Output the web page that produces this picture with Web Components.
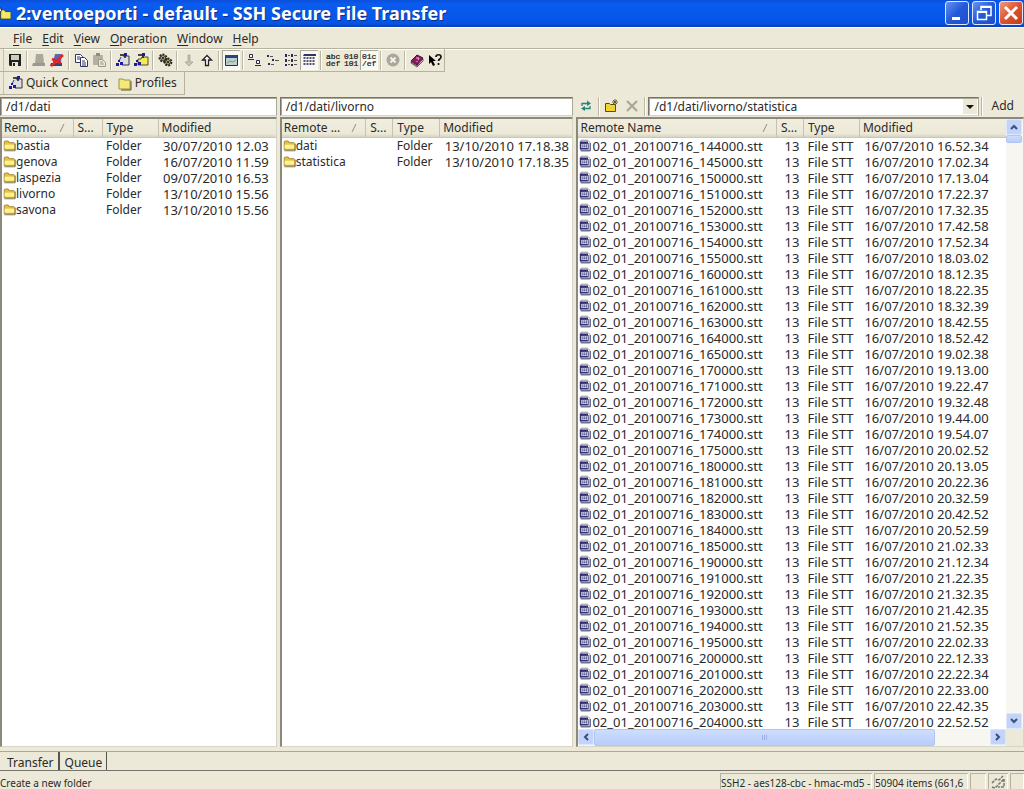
<!DOCTYPE html>
<html lang="en">
<head>
<meta charset="utf-8">
<title>2:ventoeporti - default - SSH Secure File Transfer</title>
<style>
html,body{margin:0;height:100%}
body{font:12px/16px "Noto Sans","Open Sans",sans-serif;color:#2a2a2a;background:#ece9d8;overflow:hidden}
</style>
</head>
<body>
<sftp-app></sftp-app>
<script>
const RESET = `
*{box-sizing:border-box}
button,input,select{font:inherit;color:inherit;margin:0;padding:0;border:0;background:none;border-radius:0;outline:0}
button{display:flex;align-items:center;justify-content:center;white-space:nowrap}
svg{display:block;flex:none}`;

function define(name, css, html, setup) {
  customElements.define(name, class extends HTMLElement {
    connectedCallback() {
      if (this.shadowRoot) return;
      const root = this.attachShadow({ mode: 'open' });
      root.innerHTML = `<style>${RESET}${css}</style>${typeof html === 'function' ? html(this) : html}`;
      if (setup) setup(this, root);
    }
  });
}

/* 16x16 icon artwork */
const ICONS = {
  app: '<path d="M5 5h4l1 2h6v8H5z" fill="#f5e96b" stroke="#44421a"/><path d="M1 13V6l4-3 1 3-3 3v5z" fill="#f4f4f4" stroke="#222"/>',
  save: '<path d="M2 2h12v12H3l-1-1z" fill="#222"/><path d="M4 3h8v5H4z" fill="#cfcfb5"/><path d="M5 10h6v4H5z" fill="#e8e8e0"/><path d="M6 11h2v3H6z" fill="#222"/>',
  connect: '<path d="M5 2h7l1 9H4z" fill="#aaa79b"/><path d="M2 11h12v3H1z" fill="#9c998e"/>',
  disconnect: '<path d="M6 2h7l-1 8H4z" fill="#5a68ad"/><path d="M2 11h11v3H1z" fill="#37417d"/><path d="M2 14 14 3M3 7l9 4" stroke="#e3222b" stroke-width="2.6"/>',
  copy: '<g fill="#fff" stroke="#343463"><path d="M2.500 2.500h5l2 2v6h-7z"/><path d="M7.500 5.500h4l3 3v6h-7z"/></g><path d="M4 5h3M4 7h3M9 9h3M9 11h4M9 13h4" stroke="#343463"/>',
  paste: '<path d="M2 3h10v10H2z" fill="#b3b0a4"/><path d="M5 1h4v3H5z" fill="#8f8c81"/><path d="M7.500 7.500h4l3 3v4h-7z" fill="#ece9d8" stroke="#99968a"/><path d="M9 10h3M9 12h4" stroke="#99968a"/>',
  newterm: '<path d="M7 4h7v9H5V7z" fill="#ddd"/><path d="M8 4h6v9H7" fill="none" stroke="#334"/><path d="M5 3h5v3" fill="none" stroke="#111" stroke-width="1.4"/><path d="M6 5 4 9" stroke="#33a"/><path d="M1 11h3v3H1zM5 10h3v3H5zM3 8h2v2H3zM9 1h3v3H9z" fill="#1c1c9c"/>',
  newftp: '<path d="M5 7h3l1-2h6v8H5z" fill="#f4ec55" stroke="#555020"/><path d="M5 3h5v3" fill="none" stroke="#111" stroke-width="1.4"/><path d="M1 11h3v3H1zM5 10h3v3H5zM3 8h2v2H3zM9 1h3v3H9z" fill="#1c1c9c"/>',
  settings: '<g fill="none" stroke="#222" stroke-width="2"><circle cx="6" cy="6" r="3.4" stroke-dasharray="2 1"/><circle cx="11" cy="10" r="3.4" stroke-dasharray="2 1"/></g><g fill="#cfc55d" stroke="#333"><circle cx="6" cy="6" r="2.4"/><circle cx="11" cy="10" r="2.4"/></g><path d="M5 5h2v2H5zM10 9h2v2h-2z" fill="#333"/>',
  down: '<path d="M7 3h2v7h3l-4 4-4-4h3z" fill="#c8c5b8" stroke="#9b988c" stroke-width=".7"/>',
  up: '<path d="M6.500 13.500V8h-3L8 3.500 12.500 8h-3v5.500z" fill="#fff" stroke="#222" stroke-width="1.3"/>',
  pane: '<path d="M2.500 3.500h12v10h-12z" fill="#bcd0cf" stroke="#223056"/><path d="M2 3h13v3H2z" fill="#27467e"/><path d="M4 11l3-2 3 1 3-2" fill="none" stroke="#829b80"/>',
  large: '<g fill="#fff" stroke="#29295e"><path d="M2.500 2.500h3v3h-3zM9.500 8.500h3v3h-3z"/></g><path d="M1 7.500h6M8 13.500h6" stroke="#29295e"/>',
  small: '<g fill="#29295e"><path d="M2 3h2v2H2zM7 7h2v2H7zM3 11h2v2H3z"/></g><path d="M5 4.500h3M10 8.500h4M6 12.500h3" stroke="#555"/>',
  list: '<g fill="#29295e"><path d="M2 2h2v3H2zM2 7h2v3H2zM2 12h2v2H2zM8 2h2v3H8zM8 7h2v3H8zM8 12h2v2H8z"/></g><path d="M5 3.500h2M5 8.500h2M5 12.500h2M11 3.500h3M11 8.500h3M11 12.500h3" stroke="#555"/>',
  details: '<path d="M3 2h12v2H2z" fill="#343460"/><path d="M3.500 5v9M6.500 5v9M9.500 5v9M12.500 5v9" stroke="#55557a" stroke-width="2" stroke-dasharray="2 1"/>',
  cancel: '<circle cx="8" cy="8" r="6.500" fill="#aaa79e"/><path d="m5.500 5.500 5 5m0-5-5 5" stroke="#f5f3e9" stroke-width="2"/>',
  book: '<path d="m2 9 6-6 6 3-6 7z" fill="#8c1c62" stroke="#461036"/><path d="m2 10 6 4 6-7v2l-6 6-6-4z" fill="#fff" stroke="#461036" stroke-width=".7"/><path d="m7 6 3 0-1 2M8 9v1" stroke="#f4b6d7" fill="none"/>',
  whats: '<path d="M2 3v9l2-2 2 4 2-1-2-4h3z" fill="#000"/><path d="M9 5c0-3 5-3 5 0 0 2-2.500 2-2.500 4M11.500 11v2" fill="none" stroke="#111" stroke-width="1.700"/>',
  folder: '<path d="M2 4h4l1 1h6v9H2z" fill="#f6e97a" stroke="#9d9140"/><path d="M14 6v9H4" fill="none" stroke="#5b5426"/>',
  closedfolder: '<path d="M1.500 13.500v-10l1-1h4l1 2h6l1 1v8z" fill="#e9c53c" stroke="#99751c"/><path d="M2 7h12v5H2z" fill="#fdf19b"/><path d="M2 14.500h13V6" fill="none" stroke="#7c6a34"/>',
  stt: '<path d="M2.500 1.500h8l3 3v10h-11z" fill="#f6f6fc" stroke="#77779a"/><path d="M1 3h10v3H1zM1 3h2v9H1zM1 11h10v2H1z" fill="#30306a"/><path d="M3 6h8v5H3z" fill="#d4d4ea"/><path d="M4 7.500h6M4 9.500h6" stroke="#30306a" stroke-width="1.200" stroke-dasharray="1.500 .8"/><path d="M11.500 5v8M2 14.500h12V5" fill="none" stroke="#43437a"/>',
  refresh: '<g fill="none" stroke="#26847a" stroke-width="1.300"><path d="M4 8V5.500h6M12 8v2.500H6"/></g><path d="M9 2.500l4 3L9 8zM7 8l-4 2.500L7 13z" fill="#26847a"/>',
  newfolder: '<path d="M1.500 5.500h4l1 1h5v7h-10z" fill="#f2d62d" stroke="#554b12"/><path d="M11 1v6M8 4h6M9 2l4 4m0-4L9 6" stroke="#5b562d" stroke-width=".9"/>',
  remove: '<path d="m3 3 10 10m0-10L3 13" stroke="#aaa79b" stroke-width="2.200"/>',
  link: '<path d="M2 9l4-4 3 1 4-4M2 13l3 1 9-9v8H8" fill="none" stroke="#77756d" stroke-width="1.500" stroke-dasharray="3 1"/>'
};
const textIcon = (a, b) => `<g font-family="Liberation Mono,monospace" font-size="8" fill="#111" stroke="#111" stroke-width=".2"><text x="1" y="7">${a}</text><text x="1" y="14">${b}</text></g>`;
ICONS.ascii = textIcon('abc', 'def');
ICONS.binary = textIcon('010', '101');
ICONS.auto = textIcon('01c', '/ef');
const icon = (n, s = 16) => `<svg width="${s}" height="${s}" viewBox="0 0 16 16" aria-hidden="true">${ICONS[n]}</svg>`;

define('title-bar', `
:host{display:flex;align-items:center;height:27px;flex:none;color:#fff;
background:linear-gradient(#0a4fd8,#0a5cf0 15%,#0557ea 70%,#0553e2 88%,#0a3fb4);padding:0 1px 2px 0}
.mark{margin:0 5px 0 -4px}
h1{flex:1;margin:0;font:bold 18px/24px "Noto Sans",sans-serif;text-shadow:1px 1px #0a318c;white-space:nowrap}
.ctl{display:flex;gap:3px}
button{width:24px;height:24px;border:1px solid #dfe8fb;border-radius:3px;background:linear-gradient(135deg,#6a93ee,#2358d8 50%,#1d4fca)}
button.close{background:linear-gradient(135deg,#f09a7c,#dd5231 50%,#c23c18)}`,
`<span class="mark">${icon('app', 15)}</span><h1><slot></slot></h1><div class="ctl">
<button aria-label="Minimize"><svg width="18" height="18"><path d="M4 13h8v3H4z" fill="#fff"/></svg></button>
<button aria-label="Restore"><svg width="18" height="18" fill="none" stroke="#fff"><path d="M6 6V2.500h10v9h-4" stroke-width="1.500"/><path d="M6 3h10" stroke-width="2"/><path d="M2.500 7.500h9v8h-9z" stroke-width="1.500"/><path d="M2 8h10" stroke-width="2"/></svg></button>
<button class="close" aria-label="Close"><svg width="18" height="18"><path d="m3 3 12 12m0-12L3 15" stroke="#fff" stroke-width="3"/></svg></button></div>`);

define('menu-bar', `
:host{display:flex;align-items:center;height:22px;flex:none;padding:1px 0 0 8px;border-bottom:1px solid #b5b2a2;box-shadow:0 1px #fff;border-top:1px solid #fff}
button{height:20px;padding:0 5px}
span:first-child{text-decoration:underline;text-underline-offset:2px}`,
['File', 'Edit', 'View', 'Operation', 'Window', 'Help'].map(m => `<button><span>${m[0]}</span><span>${m.slice(1)}</span></button>`).join(''));

define('tool-strip', `
:host{display:flex;align-items:center;height:23px;flex:none;align-self:flex-start;padding-left:6px;
border-right:1px solid #b5b2a2;border-bottom:1px solid #b5b2a2;box-shadow:inset 3px 0 #ece9d8,inset 4px 0 #c4c1b1}`, '<slot></slot>');

define('tool-button', `
:host{display:block}
button{gap:2px;width:18px;height:20px}
:host([label]) button{width:auto;padding:0 7px 0 2px}
:host([pressed]) button{background:#f8f7f1;box-shadow:inset 1px 1px #aca899,inset -1px -1px #fff}`,
el => `<button aria-label="${el.getAttribute('label') || el.getAttribute('icon')}">${icon(el.getAttribute('icon'))}<slot></slot></button>`);

define('tool-separator', `:host{display:block;width:6px;height:19px;flex:none;background:linear-gradient(90deg,transparent 2px,#bab7a7 2px 3px,#fff 3px 4px,transparent 4px)}`, '');

define('path-bar', `
:host{display:flex;align-items:center;height:20px;flex:none;min-width:0}
input,select{flex:1;min-width:0;width:100%;height:19px;background:#fff;border:1px solid;border-color:#77756b #aca899 #d8d5c6 #77756b;box-shadow:inset 1px 1px #aca899;padding:1px 5px;appearance:none}
.combo{flex:1;display:flex;position:relative;min-width:0}
.combo svg{position:absolute;right:2px;top:2px;background:#ece9d8;pointer-events:none}
tool-button{margin:0 1px 0 1px}
.add{padding:0 10px 0 7px}
`, el => {
  const p = el.getAttribute('path');
  return el.hasAttribute('tools')
    ? `<tool-button icon="refresh"></tool-button><tool-separator></tool-separator><tool-button icon="newfolder"></tool-button><tool-button icon="remove"></tool-button><tool-separator></tool-separator>
<div class="combo"><select aria-label="Remote path"><option>${p}</option></select><svg width="14" height="15"><path d="M3 6h8l-4 4z" fill="#111"/></svg></div><tool-separator></tool-separator><button class="add">Add</button>`
    : `<input aria-label="Remote path" value="${p}">`;
});

define('file-table', `
:host{display:block;min-width:0;flex:1;overflow:hidden;background:#fff}
table{width:100%;table-layout:fixed;border-collapse:collapse}
th{height:18px;padding:0 0 0 4px;font-weight:normal;text-align:left;background:linear-gradient(#f0eddf,#ece9d8 80%,#d8d4c2);white-space:nowrap;overflow:hidden;border-right:1px solid #c6c2b0;border-bottom:1px solid #cbc7b6}
th:first-child{padding-left:2px}
th:last-child{padding-left:3px;border-right:0}
.sort{display:flex;align-items:center;justify-content:space-between;padding-right:7px}
td{height:16px;padding:0 0 0 4px;white-space:nowrap;overflow:hidden}
td:first-child{padding-left:1px}
td:nth-child(2){text-align:right;padding:0 4px 0 0}
td:nth-child(4){padding-left:5px}
td:nth-child(2),td:nth-child(4),tr.file td{font-size:13px}
.name{display:flex;align-items:center}
`, el => {
  const w = el.getAttribute('cols').split(' ');
  return `<table><colgroup>${w.map(x => `<col style="width:${x}px">`).join('')}<col></colgroup>
<thead><tr><th scope="col"><div class="sort"><span>${el.getAttribute('heading')}</span><svg width="8" height="10"><path d="m2 9 4-8" stroke="#8f8c7c"/></svg></div></th><th scope="col">S...</th><th scope="col">Type</th><th scope="col">Modified</th></tr></thead><tbody></tbody></table>`;
}, (el, root) => {
  const data = DATA[el.getAttribute('source')];
  root.querySelector('tbody').innerHTML = data.map(([n, s, t, m]) => {
    const kind = t === 'Folder' ? 'folder' : 'file';
    return `<tr class="${kind}"><td><div class="name">${icon(kind === 'folder' ? 'closedfolder' : 'stt', 13)}<span>${n}</span></div></td><td>${s}</td><td>${t}</td><td>${m}</td></tr>`;
  }).join('');
});

define('scroll-bar', `
:host{display:flex;flex:none;background:#f7f6f0}
:host([vertical]){flex-direction:column;width:17px}
:host([horizontal]){height:17px}
button{width:16px;height:16px;flex:none;border-radius:2px;background:#c3d3fa;border:1px solid #dce6fd;color:#3c5587}
.thumb{display:flex;align-items:center;justify-content:center;background:linear-gradient(#cdddfd,#b9cdfa);border:1px solid #b3c5f1;border-radius:2px}
.track{flex:1;display:flex}
:host([horizontal]) .thumb{width:86%}
:host([vertical]) .thumb{width:16px;height:8px}
`, el => {
  const v = el.hasAttribute('vertical');
  const arrow = d => `<svg width="10" height="10"><path d="${d}" fill="none" stroke="#36507f" stroke-width="2"/></svg>`;
  return `<button aria-label="Scroll back">${arrow(v ? 'M2 7l3-3 3 3' : 'M7 2L4 5l3 3')}</button><div class="track"><div class="thumb">${v ? '' : '<svg width="8" height="7"><path d="M1.500 1v5M3.500 1v5M5.500 1v5" stroke="#9ab1e6"/></svg>'}</div></div><button aria-label="Scroll forward">${arrow(v ? 'M2 3l3 3 3-3' : 'M3 2l3 3-3 3')}</button>`;
});

define('file-pane', `
:host{display:flex;flex-direction:column;min-width:0;min-height:0}
.list{flex:1;display:flex;flex-direction:column;min-height:0;border:1px solid #d8d5c6;border-top:2px solid #8c897b;border-left:2px solid #8c897b;margin-top:1px;background:#fff}
.main{flex:1;display:flex;min-height:0}
.foot{display:flex;background:#ece9d8}
.foot scroll-bar{flex:1}
.corner{width:17px}
`, el => {
  const s = el.hasAttribute('scroll');
  const a = n => `${n}="${el.getAttribute(n)}"`;
  return `<path-bar ${a('path')} ${s ? 'tools' : ''}></path-bar><div class="list"><div class="main"><file-table ${a('heading')} ${a('cols')} ${a('source')}></file-table>${s ? '<scroll-bar vertical></scroll-bar>' : ''}</div>${s ? '<div class="foot"><scroll-bar horizontal></scroll-bar><div class="corner"></div></div>' : ''}</div>`;
});

define('tab-strip', `
:host{display:flex;height:20px;flex:none;margin-top:4px;padding-left:2px;border-top:1px solid #aca899;border-bottom:1px solid #77756b}
button{height:18px;padding:3px 4px 0 5px;border-right:2px solid #55534b}
button+button{border-right-width:1px}`,
'<button role="tab" aria-selected="true">Transfer</button><button role="tab" aria-selected="false">Queue</button>');

define('status-bar', `
:host{display:flex;height:18px;flex:none;align-items:stretch;font-size:10px;line-height:20px;padding-top:2px;gap:2px;white-space:nowrap}
.msg{flex:1}
.cell{padding-left:1px;box-shadow:inset 1px 1px #b5b2a2,inset -1px 0 #fff}
.a{width:152px}.b{width:94px}.c{width:16px}.d{width:20px;padding:1px 2px}.e{width:14px}`,
`<div class="msg">Create a new folder</div><div class="cell a">SSH2 - aes128-cbc - hmac-md5 -</div><div class="cell b">50904 items (661,6</div><div class="cell c"></div><div class="cell d">${icon('link')}</div><div class="cell e"></div>`);

const TIMES = '16.52.34 17.02.34 17.13.04 17.22.37 17.32.35 17.42.58 17.52.34 18.03.02 18.12.35 18.22.35 18.32.39 18.42.55 18.52.42 19.02.38 19.13.00 19.22.47 19.32.48 19.44.00 19.54.07 20.02.52 20.13.05 20.22.36 20.32.59 20.42.52 20.52.59 21.02.33 21.12.34 21.22.35 21.32.35 21.42.35 21.52.35 22.02.33 22.12.33 22.22.34 22.33.00 22.42.35 22.52.52'.split(' ');
const DATA = {
  dati: [['bastia', '30/07/2010 12.03'], ['genova', '16/07/2010 11.59'], ['laspezia', '09/07/2010 16.53'], ['livorno', '13/10/2010 15.56'], ['savona', '13/10/2010 15.56']].map(([n, d]) => [n, '', 'Folder', d]),
  livorno: [['dati', '', 'Folder', '13/10/2010 17.18.38'], ['statistica', '', 'Folder', '13/10/2010 17.18.35']],
  statistica: TIMES.map((t, i) => {
    const slot = 14 * 6 + 4 + i;
    return [`02_01_20100716_${Math.floor(slot / 6)}${slot % 6}000.stt`, '13', 'File STT', `16/07/2010 ${t}`];
  })
};

const tools = 'save | connect disconnect | copy paste | newterm newftp | settings | down up | pane* | large small list details* | ascii binary auto* | cancel | book whats'
  .split(' ').map(n => n === '|' ? '<tool-separator></tool-separator>' : `<tool-button icon="${n.replace('*', '')}" ${n.endsWith('*') ? 'pressed' : ''}></tool-button>`).join('');

define('sftp-app', `
:host{display:flex;flex-direction:column;height:100vh;min-width:0;overflow:hidden}
.panes{flex:1;display:grid;grid-template-columns:277fr 294fr 448fr;gap:2px 3px;min-height:0;margin-top:1px}
`, `<title-bar>2:ventoeporti - default - SSH Secure File Transfer</title-bar>
<menu-bar></menu-bar>
<tool-strip>${tools}</tool-strip>
<tool-strip><tool-button icon="newterm" label="Quick Connect">Quick Connect</tool-button><tool-button icon="folder" label="Profiles">Profiles</tool-button></tool-strip>
<div class="panes">
<file-pane path="/d1/dati" heading="Remo..." cols="71 29 56" source="dati"></file-pane>
<file-pane path="/d1/dati/livorno" heading="Remote ..." cols="84 27 47" source="livorno"></file-pane>
<file-pane scroll path="/d1/dati/livorno/statistica" heading="Remote Name" cols="198 27 56" source="statistica"></file-pane>
</div>
<tab-strip role="tablist"></tab-strip>
<status-bar></status-bar>`);
</script>
</body>
</html>
